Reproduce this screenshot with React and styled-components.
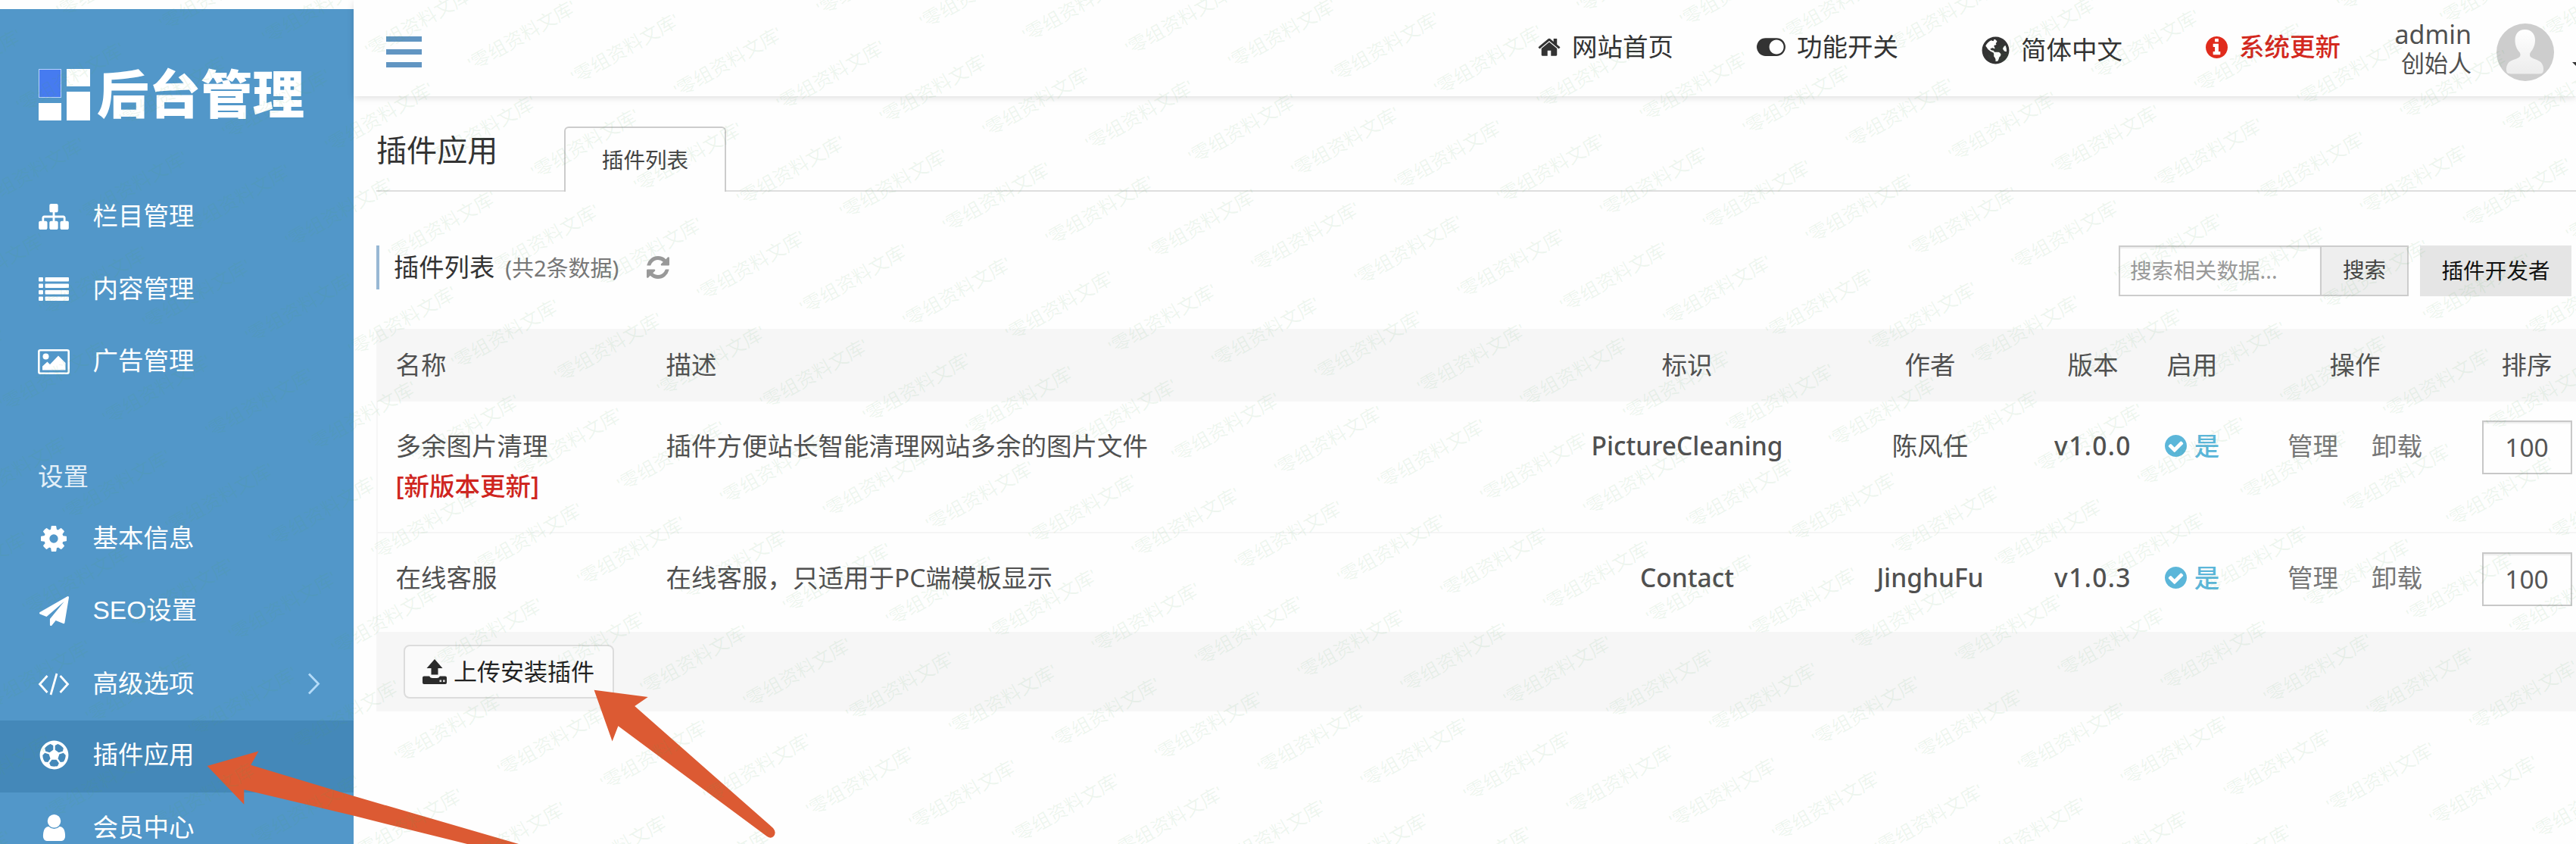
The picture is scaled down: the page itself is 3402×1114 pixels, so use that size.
import React from "react";
import styled, { createGlobalStyle } from "styled-components";
import { FaRegFutbol, FaGlobeAmericas } from "react-icons/fa";

const GlobalStyle = createGlobalStyle`
  *, *::before, *::after { box-sizing: border-box; }
  body { margin: 0; background: #fefefe; }
  input, button { font: inherit; margin: 0; }
`;

const sans = `"Noto Sans", "Noto Sans CJK SC", sans-serif`;
const helvetica = `"Liberation Sans", "Noto Sans CJK SC", sans-serif`;

const Page = styled.div`
  position: relative;
  display: flex;
  width: 3402px;
  height: 1114px;
  overflow: hidden;
  font-family: ${sans};
  font-size: 33.5px;
  line-height: 1;
  color: #505050;
  white-space: nowrap;
`;

/* ---------- sidebar ---------- */

const Sidebar = styled.aside`
  flex: none;
  width: 467px;
  margin-top: 12px;
  background: #5297c9;
  font-family: ${helvetica};
  color: #fff;
`;

const Logo = styled.div`
  display: flex;
  gap: 9px;
  height: 226px;
  padding: 79px 0 0 51px;
`;

const LogoMark = styled.div`
  display: grid;
  grid-template-columns: 30px 31px;
  column-gap: 7px;
  height: 68px;
`;

const LogoColumn = styled.div`
  display: grid;
  grid-template-rows: ${(p) => p.$rows};
  row-gap: 7px;
`;

const LogoTile = styled.div`
  background: ${(p) => (p.$accent ? "#467bf0" : "#fff")};
  border: ${(p) => (p.$accent ? "1.5px solid #b9d3fb" : "none")};
`;

const LogoText = styled.div`
  font-family: "Noto Sans CJK SC", sans-serif;
  font-size: 68.5px;
  font-weight: 900;
  line-height: 59px;
`;

const MenuItem = styled.div`
  display: flex;
  align-items: center;
  height: 95.7px;
  padding: 0 44px ${(p) => (p.$lift || 0) + "px"} 49px;
  background: ${(p) => (p.$active ? "#4488b9" : "transparent")};
`;

const MenuIcon = styled.span`
  display: flex;
  justify-content: center;
  width: 44px;
  margin-right: 29.5px;
`;

const MenuLabel = styled.span`
  flex: 1;
  line-height: 44px;
`;

const MenuHeading = styled.div`
  height: 138.5px;
  padding: 83px 0 0 50px;
  line-height: 44px;
  color: #e3eff8;
`;

/* ---------- main ---------- */

const Main = styled.main`
  flex: 1;
  min-width: 0;
`;

const Header = styled.header`
  display: flex;
  height: 127px;
  padding: 0 0 0 43px;
  background: #fefefe;
  box-shadow: 0 2px 9px rgba(0, 0, 0, 0.13);
`;

const Burger = styled.div`
  display: grid;
  grid-template-rows: repeat(3, 7px);
  row-gap: 10px;
  width: 48px;
  margin-top: 48px;
`;

const BurgerBar = styled.span`
  background: #6195c2;
`;

const TopNav = styled.nav`
  display: flex;
  gap: 109.5px;
  margin-left: 1474px;
  color: #333;
`;

const TopLink = styled.span`
  display: flex;
  align-items: center;
  gap: 15.5px;
  height: 48px;
  margin-top: ${(p) => p.$top || 38}px;
  color: ${(p) => (p.$alert ? "#d3281e" : "inherit")};
  font-weight: ${(p) => (p.$alert ? 500 : 400)};
`;

const Account = styled.div`
  display: flex;
  flex: none;
  width: 311px;
  justify-content: flex-end;
`;

const AccountText = styled.div`
  padding-top: 24px;
  margin-right: 33px;
  text-align: right;
`;

const AccountName = styled.div`
  font-size: 34px;
  line-height: 42px;
`;

const AccountRole = styled.div`
  font-size: 31px;
  line-height: 34px;
`;

const AvatarBox = styled.div`
  flex: none;
  width: 76px;
  padding-top: 31px;
  margin-right: 23px;
`;

const CaretBox = styled.div`
  flex: none;
  width: 6px;
  padding-top: 62px;
  overflow: hidden;
`;

const Content = styled.div`
  padding-left: 30px;
`;

const TitleBar = styled.div`
  display: flex;
  height: 126px;
`;

const PageTitle = styled.h1`
  width: 248px;
  height: 126px;
  margin: 0;
  padding-top: 43px;
  border-bottom: 2px solid #dedede;
  font-size: 40.1px;
  font-weight: 400;
  line-height: 56px;
  color: #333;
`;

const Tab = styled.div`
  width: 214px;
  margin-top: 40px;
  padding-top: 22px;
  border: 2px solid #ccc;
  border-bottom: none;
  border-radius: 6px 6px 0 0;
  font-size: 28.6px;
  line-height: 40px;
  text-align: center;
  color: #444;
`;

const TabRest = styled.div`
  flex: 1;
  border-bottom: 2px solid #dedede;
`;

const ListHead = styled.div`
  display: flex;
  align-items: flex-start;
  height: 181px;
  padding-top: 71px;
`;

const ListTitle = styled.h2`
  display: flex;
  align-items: center;
  height: 58px;
  margin: 0;
  padding-left: 19px;
  border-left: 4px solid #98b8d4;
  font-size: 33.3px;
  font-weight: 400;
  color: #333;
`;

const Count = styled.span`
  margin: 0 37px 0 14px;
  font-size: 29px;
  color: #777;
`;

const SearchBox = styled.div`
  display: flex;
  width: 383px;
  height: 67px;
  margin: 0 15px 0 auto;
  border: 2px solid #ccc;
  font-size: 28.6px;
`;

const SearchInput = styled.input`
  width: 264px;
  padding: 0 0 2px 13px;
  border: none;
  background: transparent;
  box-shadow: inset 0 2px 2px rgba(0, 0, 0, 0.07);
  outline: none;
  &::placeholder { color: #999; opacity: 1; }
`;

const SearchButton = styled.button`
  flex: 1;
  padding: 0 0 2px;
  border: none;
  border-left: 2px solid #ccc;
  background: #eee;
  color: #444;
`;

const DeveloperButton = styled.button`
  width: 200px;
  height: 67px;
  margin: 0 6px 0 0;
  padding: 0 0 1px;
  border: none;
  background: #e5e5e5;
  font-size: 28.6px;
  color: #111;
`;

const Row = styled.div`
  display: grid;
  grid-template-columns: 382.5px 1179.5px 336px 306px 124px 138px 292px 162px;
  height: ${(p) => p.$height}px;
  background: ${(p) => (p.$head ? "#f6f6f6" : "transparent")};
  border-left: 2px solid #f6f6f6;
  border-bottom: ${(p) => (p.$divided ? "2px solid #f5f5f5" : "none")};
  margin-right: -20px;
`;

const Cell = styled.div`
  padding-top: ${(p) => (p.$head ? 20.5 : 32)}px;
  padding-left: ${(p) => (p.$left ? p.$left : 0)}px;
  line-height: 53px;
  margin-left: -2px;
  text-align: ${(p) => (p.$left !== undefined ? "left" : "center")};
  font-weight: ${(p) => (p.$latin ? 500 : 400)};
  letter-spacing: ${(p) => p.$tracking || 0}px;
`;

const UpdateNote = styled.div`
  font-weight: 500;
  color: #cf2520;
`;

const Enabled = styled.div`
  display: flex;
  align-items: center;
  justify-content: center;
  gap: 10px;
  height: 53px;
  color: #5bb6d9;
  font-weight: 500;
`;

const Actions = styled.div`
  display: flex;
  justify-content: center;
  gap: 44px;
  color: #777;
`;

const SortInput = styled.input`
  display: block;
  width: 119px;
  height: 71px;
  margin: -7.5px auto 0;
  padding: 0;
  border: 2px solid #c8c8c8;
  background: transparent;
  box-shadow: inset 0 2px 2px rgba(0, 0, 0, 0.07);
  text-align: center;
  color: #555;
`;

const TableFoot = styled.div`
  height: 105px;
  padding: 17px 0 0 36px;
  background: #f6f6f6;
`;

const UploadButton = styled.button`
  display: flex;
  align-items: center;
  gap: 9px;
  width: 278px;
  height: 71px;
  padding: 0 0 0 23px;
  border: 2px solid #dcdcdc;
  border-radius: 8px;
  background: #fafafa;
  font-size: 31px;
  color: #222;
`;

/* ---------- overlays ---------- */

const Overlay = styled.svg`
  position: absolute;
  inset: 0;
  pointer-events: none;
`;

const MarkText = styled.text`
  font-family: ${helvetica};
  font-size: 25px;
  text-anchor: middle;
  fill: rgba(80, 165, 90, 0.095);
`;

const paths = {
  home: ["53 221 1686 1315", "M1472 992v480q0 26-19 45t-45 19h-384v-384h-256v384h-384q-26 0-45-19t-19-45v-480q0-1 .5-3t.5-3l575-474 575 474q1 2 1 6zm223-69l-62 74q-8 9-21 11h-3q-13 0-21-7l-692-577-692 577q-12 8-24 7-13-2-21-11l-62-74q-8-10-7-23.5t11-21.5l719-599q32-26 76-26t76 26l244 204v-195q0-14 9-23t23-9h192q14 0 23 9t9 23v408l219 182q10 8 11 21.5t-7 23.5z"],
  check: ["128 128 1536 1536", "M1412 734q0-28-18-46l-91-90q-19-19-45-19t-45 19l-408 407-226-226q-19-19-45-19t-45 19l-91 90q-18 18-18 46 0 27 18 45l362 362q19 19 45 19 27 0 46-19l543-543q18-18 18-45zm252 162q0 209-103 385.5t-279.5 279.5-385.5 103-385.5-103-279.5-279.5-103-385.5 103-385.5 279.5-279.5 385.5-103 385.5 103 279.5 279.5 103 385.5z"],
  info: ["128 128 1536 1536", "M1152 1376v-160q0-14-9-23t-23-9h-96v-512q0-14-9-23t-23-9h-320q-14 0-23 9t-9 23v160q0 14 9 23t23 9h96v320h-96q-14 0-23 9t-9 23v160q0 14 9 23t23 9h448q14 0 23-9t9-23zm-128-896v-160q0-14-9-23t-23-9h-192q-14 0-23 9t-9 23v160q0 14 9 23t23 9h192q14 0 23-9t9-23zm640 416q0 209-103 385.5t-279.5 279.5-385.5 103-385.5-103-279.5-279.5-103-385.5 103-385.5 279.5-279.5 385.5-103 385.5 103 279.5 279.5 103 385.5z"],
  toggle: ["0 256 2048 1280", "M0 896q0-130 51-248.5t136.5-204 204-136.5 248.5-51h768q130 0 248.5 51t204 136.5 136.5 204 51 248.5-51 248.5-136.5 204-204 136.5-248.5 51h-768q-130 0-248.5-51t-204-136.5-136.5-204-51-248.5zm1408 512q104 0 198.5-40.5t163.5-109.5 109.5-163.5 40.5-198.5-40.5-198.5-109.5-163.5-163.5-109.5-198.5-40.5-198.5 40.5-163.5 109.5-109.5 163.5-40.5 198.5 40.5 198.5 109.5 163.5 163.5 109.5 198.5 40.5z"],
  refresh: ["128 128 1536 1536", "M1639 1056q0 5-1 7-64 268-268 434.5t-478 166.5q-146 0-282.5-55t-243.5-157l-129 129q-19 19-45 19t-45-19-19-45v-448q0-26 19-45t45-19h448q26 0 45 19t19 45-19 45l-137 137q71 66 161 102t187 36q134 0 250-65t186-179q11-17 53-117 8-23 30-23h192q13 0 22.5 9.5t9.5 22.5zm25-800v448q0 26-19 45t-45 19h-448q-26 0-45-19t-19-45 19-45l138-138q-148-137-349-137-134 0-250 65t-186 179q-11 17-53 117-8 23-30 23h-199q-13 0-22.5-9.5t-9.5-22.5v-7q65-268 270-434.5t480-166.5q146 0 284 55.5t245 156.5l130-129q19-19 45-19t45 19 19 45z"],
  sitemap: ["0 128 1792 1536", "M1792 1248v320q0 40-28 68t-68 28h-320q-40 0-68-28t-28-68v-320q0-40 28-68t68-28h96v-192h-512v192h96q40 0 68 28t28 68v320q0 40-28 68t-68 28h-320q-40 0-68-28t-28-68v-320q0-40 28-68t68-28h96v-192h-512v192h96q40 0 68 28t28 68v320q0 40-28 68t-68 28h-320q-40 0-68-28t-28-68v-320q0-40 28-68t68-28h96v-192q0-52 38-90t90-38h512v-192h-96q-40 0-68-28t-28-68v-320q0-40 28-68t68-28h320q40 0 68 28t28 68v320q0 40-28 68t-68 28h-96v192h512q52 0 90 38t38 90v192h96q40 0 68 28t28 68z"],
  user: ["256 128 1280 1536", "M1536 1399q0 109-62.5 187t-150.5 78h-854q-88 0-150.5-78t-62.5-187q0-85 8.5-160.5t31.5-152 58.5-131 94-89 134.5-34.5q131 128 313 128t313-128q76 0 134.5 34.5t94 89 58.5 131 31.5 152 8.5 160.5zm-256-887q0 159-112.5 271.5t-271.5 112.5-271.5-112.5-112.5-271.5 112.5-271.5 271.5-112.5 271.5 112.5 112.5 271.5z"],
  gear: ["128 128 1536 1536", "M1152 896q0-106-75-181t-181-75-181 75-75 181 75 181 181 75 181-75 75-181zm512-109v222q0 12-8 23t-20 13l-185 28q-19 54-39 91 35 50 107 138 10 12 10 25t-9 23q-27 37-99 108t-94 71q-12 0-26-9l-138-108q-44 23-91 38-16 136-29 186-7 28-36 28h-222q-14 0-24.5-8.5t-11.5-21.5l-28-184q-49-16-90-37l-141 107q-10 9-25 9-14 0-25-11-126-114-165-168-7-10-7-23 0-12 8-23 15-21 51-66.5t54-70.5q-27-50-41-99l-183-27q-13-2-21-12.5t-8-23.5v-222q0-12 8-23t19-13l186-28q14-46 39-92-40-57-107-138-10-12-10-24 0-10 9-23 26-36 98.5-107.5t94.5-71.5q13 0 26 10l138 107q44-23 91-38 16-136 29-186 7-28 36-28h222q14 0 24.5 8.5t11.5 21.5l28 184q49 16 90 37l142-107q9-9 24-9 13 0 25 10 129 119 165 170 7 8 7 22 0 12-8 23-15 21-51 66.5t-54 70.5q26 50 41 98l183 28q13 2 21 12.5t8 23.5z"],
  plane: ["0 0 1792 1792", "M1764 11q33 24 27 64l-256 1536q-5 29-32 45-14 8-31 8-11 0-24-5l-453-185-242 295q-18 23-49 23-13 0-22-4-19-7-30.5-23.5t-11.5-36.5v-349l864-1059-1069 925-395-162q-37-14-40-55-2-40 32-59l1664-960q15-9 32-9 20 0 36 11z"],
};

function Glyph({ name, width, height, color = "currentColor" }) {
  const [viewBox, d] = paths[name];
  return (
    <svg width={width} height={height} viewBox={viewBox}>
      <path d={d} fill={color} />
    </svg>
  );
}

const ListIcon = () => (
  <svg width="40" height="31" viewBox="0 0 40 31" fill="currentColor">
    {[0, 8.5, 17, 25.5].map((y) => (
      <g key={y}>
        <rect x="0" y={y} width="6" height="5.4" rx="1" />
        <rect x="8.5" y={y} width="31.5" height="5.4" rx="1" />
      </g>
    ))}
  </svg>
);

const ImageIcon = () => (
  <svg width="42" height="33" viewBox="0 0 42 33">
    <rect x="1.3" y="1.3" width="39.4" height="30.4" rx="2" fill="none" stroke="currentColor" strokeWidth="2.6" />
    <circle cx="10.5" cy="9.5" r="4" fill="currentColor" />
    <path d="M6 27.500V22.500L12.500 16.500L16 20L27 8.500L36.500 18V27.500Z" fill="currentColor" />
  </svg>
);

const CodeIcon = () => (
  <svg width="42" height="30" viewBox="0 0 42 30" fill="none" stroke="currentColor" strokeWidth="2.8">
    <path d="M12.500 4L2.500 15L12.500 26M29.500 4L39.500 15L29.500 26M25 1L17 29" />
  </svg>
);

const ChevronIcon = () => (
  <svg width="17" height="29" viewBox="0 0 17 29" fill="none" stroke="#b4dbf8" strokeWidth="2.8">
    <path d="M2 1.500L14.500 14.500L2 27.500" />
  </svg>
);

const UploadIcon = () => (
  <svg width="32" height="33" viewBox="0 0 32 33" fill="#2b2b2b">
    <path d="M16 0L26.500 12H20.500V20.500H11.500V12H5.500Z" />
    <path d="M2 22.500H9Q10.500 25 13 25H19Q21.500 25 23 22.500H30Q32 22.500 32 24.500V31Q32 33 30 33H2Q0 33 0 31V24.500Q0 22.500 2 22.500Z" />
    <rect x="22.500" y="27.500" width="2.600" height="2.600" fill="#ddd" />
    <rect x="27" y="27.500" width="2.600" height="2.600" fill="#ddd" />
  </svg>
);

const AvatarIcon = () => (
  <svg width="76" height="76" viewBox="0 0 76 76">
    <defs>
      <linearGradient id="bust" x1="0" y1="0" x2="0" y2="1">
        <stop offset="0" stopColor="#fff" />
        <stop offset="1" stopColor="#ececec" />
      </linearGradient>
    </defs>
    <circle cx="38" cy="38" r="38" fill="#cdcdcd" />
    <path
      d="M37.500 8C46 8 51 14 51 22C51 29 48 34.500 45 38C43.500 40 43.500 43 45.500 44.500C50 47.500 57 48 60 53C62.500 57 62.500 61 61.500 64C60.500 66.500 57 66.500 54 66.500H21C18 66.500 14.500 66.500 13.500 64C12.500 61 12.500 57 15 53C18 48 26 47.500 30 44.500C32 43 32 40 30.500 38C27 34.500 24.500 29 24.500 22C24.500 14 29 8 37.500 8Z"
      fill="url(#bust)"
    />
  </svg>
);

const CaretIcon = () => (
  <svg width="18" height="9" viewBox="0 0 18 9" fill="#333">
    <path d="M1 0H17L9 8Z" />
  </svg>
);

const contentMenu = [
  { label: "栏目管理", icon: <Glyph name="sitemap" width={40} height={34} /> },
  { label: "内容管理", icon: <ListIcon /> },
  { label: "广告管理", icon: <ImageIcon /> },
];

const settingsMenu = [
  { label: "基本信息", icon: <Glyph name="gear" width={34} height={34} /> },
  { label: "SEO设置", icon: <Glyph name="plane" width={39} height={39} />, lift: 2 },
  { label: "高级选项", icon: <CodeIcon />, chevron: true, lift: 0 },
  { label: "插件应用", icon: <FaRegFutbol size={39} />, active: true, lift: 3 },
  { label: "会员中心", icon: <Glyph name="user" width={31} height={35} />, lift: 3 },
];

const plugins = [
  { name: "多余图片清理", update: "[新版本更新]", text: "插件方便站长智能清理网站多余的图片文件", id: "PictureCleaning", author: "陈风任", version: "v1.0.0", height: 174 },
  { name: "在线客服", text: "在线客服，只适用于PC端模板显示", id: "Contact", author: "JinghuFu", version: "v1.0.3", height: 130 },
];

function Menu({ items }) {
  return items.map((item) => (
    <MenuItem key={item.label} $active={item.active} $lift={item.lift}>
      <MenuIcon>{item.icon}</MenuIcon>
      <MenuLabel>{item.label}</MenuLabel>
      {item.chevron && <ChevronIcon />}
    </MenuItem>
  ));
}

function Watermark() {
  const marks = [];
  for (let m = -5; m < 12; m++) {
    for (let n = -6; n < 30; n++) {
      const x = 558 + n * 135.9 - m * 52.7;
      const y = 37 + n * 17.55 + m * 125.6;
      if (x > -65 && x < 3465 && y > -30 && y < 1155) marks.push([x, y]);
    }
  }
  return (
    <Overlay width="3402" height="1114" aria-hidden="true">
      {marks.map(([x, y]) => (
        <MarkText key={`${x},${y}`} transform={`translate(${x.toFixed(1)} ${y.toFixed(1)}) rotate(-29.7)`}>
          '零组资料文库'
        </MarkText>
      ))}
    </Overlay>
  );
}

function Arrows() {
  return (
    <Overlay width="3402" height="1114" fill="#dc5a33">
      <path d="M273.700 1011L341.500 991.400L331.300 1009.800L466.500 1050.500L685 1114H617L466.500 1076.600L322.300 1042.300V1061.800Z" />
      <path d="M784.600 910.700L855.700 920L838.200 932L1021 1093Q1026 1099 1021.500 1104Q1018 1107.500 1013 1104L816.400 958.300L808.600 978.500Z" />
    </Overlay>
  );
}

export default function App() {
  return (
    <Page>
      <GlobalStyle />
      <Sidebar>
        <Logo>
          <LogoMark>
            <LogoColumn $rows="38px 23px">
              <LogoTile $accent />
              <LogoTile />
            </LogoColumn>
            <LogoColumn $rows="23px 38px">
              <LogoTile />
              <LogoTile />
            </LogoColumn>
          </LogoMark>
          <LogoText>后台管理</LogoText>
        </Logo>
        <Menu items={contentMenu} />
        <MenuHeading>设置</MenuHeading>
        <Menu items={settingsMenu} />
      </Sidebar>

      <Main>
        <Header>
          <Burger>
            <BurgerBar />
            <BurgerBar />
            <BurgerBar />
          </Burger>
          <TopNav>
            <TopLink><Glyph name="home" width={30} height={24} />网站首页</TopLink>
            <TopLink><Glyph name="toggle" width={38} height={24} />功能开关</TopLink>
            <TopLink $top={42}><FaGlobeAmericas size={37} />简体中文</TopLink>
            <TopLink $alert><Glyph name="info" width={29} height={29} color="#e02b1c" />系统更新</TopLink>
          </TopNav>
          <Account>
            <AccountText>
              <AccountName>admin</AccountName>
              <AccountRole>创始人</AccountRole>
            </AccountText>
            <AvatarBox><AvatarIcon /></AvatarBox>
            <CaretBox><CaretIcon /></CaretBox>
          </Account>
        </Header>

        <Content>
          <TitleBar>
            <PageTitle>插件应用</PageTitle>
            <Tab>插件列表</Tab>
            <TabRest />
          </TitleBar>

          <ListHead>
            <ListTitle>
              插件列表
              <Count>(共2条数据)</Count>
              <Glyph name="refresh" width={30} height={30} color="#999" />
            </ListTitle>
            <SearchBox>
              <SearchInput placeholder="搜索相关数据..." />
              <SearchButton>搜索</SearchButton>
            </SearchBox>
            <DeveloperButton>插件开发者</DeveloperButton>
          </ListHead>

          <Row $height={96} $head>
            <Cell $head $left={25.5}>名称</Cell>
            <Cell $head $left={0}>描述</Cell>
            <Cell $head>标识</Cell>
            <Cell $head>作者</Cell>
            <Cell $head>版本</Cell>
            <Cell $head>启用</Cell>
            <Cell $head>操作</Cell>
            <Cell $head>排序</Cell>
          </Row>
          {plugins.map((p, i) => (
            <Row key={p.id} $height={p.height} $divided={i === 0}>
              <Cell $left={25.5}>
                {p.name}
                {p.update && <UpdateNote>{p.update}</UpdateNote>}
              </Cell>
              <Cell $left={0}>{p.text}</Cell>
              <Cell $latin>{p.id}</Cell>
              <Cell $latin={i === 1}>{p.author}</Cell>
              <Cell $latin $tracking={1.4}>{p.version}</Cell>
              <Cell>
                <Enabled><Glyph name="check" width={29} height={29} />是</Enabled>
              </Cell>
              <Cell>
                <Actions><span>管理</span><span>卸载</span></Actions>
              </Cell>
              <Cell><SortInput defaultValue="100" /></Cell>
            </Row>
          ))}
          <TableFoot>
            <UploadButton><UploadIcon />上传安装插件</UploadButton>
          </TableFoot>
        </Content>
      </Main>

      <Arrows />
      <Watermark />
    </Page>
  );
}
